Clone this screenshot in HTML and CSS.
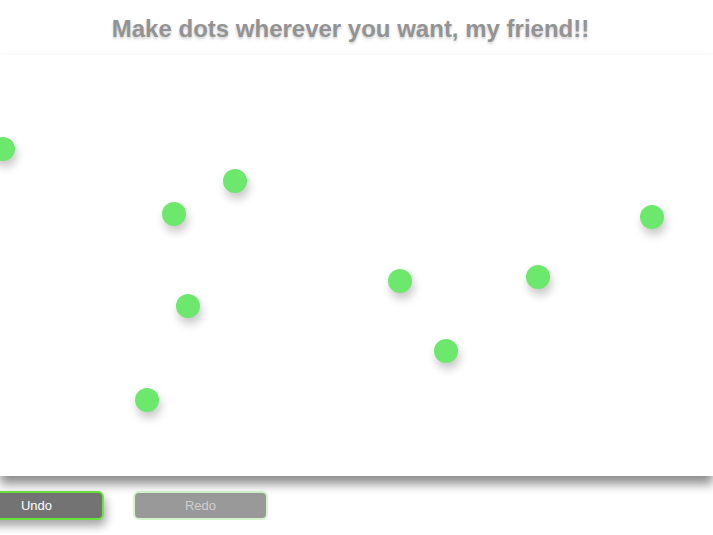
FILE: index.html
```html
<!DOCTYPE html>
<html>
<head>
<meta charset="utf-8">
<link rel="stylesheet" href="styles.css">
</head>
<body>
<header class="header">
  <h1 class="title">Make dots wherever you want, my friend!!</h1>
</header>
<main class="canvas">
  <span class="dot" style="left:3px;top:94px"></span>
  <span class="dot" style="left:174px;top:159px"></span>
  <span class="dot" style="left:235px;top:126px"></span>
  <span class="dot" style="left:188px;top:251px"></span>
  <span class="dot" style="left:147px;top:345px"></span>
  <span class="dot" style="left:400px;top:226px"></span>
  <span class="dot" style="left:446px;top:296px"></span>
  <span class="dot" style="left:538px;top:222px"></span>
  <span class="dot" style="left:652px;top:162px"></span>
</main>
<div class="controls">
  <button class="btn btn-undo">Undo</button>
  <button class="btn btn-redo">Redo</button>
</div>
</body>
</html>
```

FILE: styles.css
```css
html, body {
  margin: 0;
  padding: 0;
  background: #ffffff;
  overflow: hidden;
  font-family: "Liberation Sans", Arial, sans-serif;
}
.header {
  height: 55px;
  display: flex;
  justify-content: center;
  padding-right: 12px;
}
.title {
  margin: 0;
  padding-top: 15px;
  font-size: 24px;
  font-weight: bold;
  color: #939393;
  text-shadow: 0 2px 3px rgba(0,0,0,0.2);
  line-height: 28px;
}
.canvas {
  position: relative;
  height: 421px;
  background: #ffffff;
  box-shadow: 0 8px 10px rgba(0,0,0,0.45);
}
.dot {
  position: absolute;
  width: 24px;
  height: 24px;
  margin: -12px 0 0 -12px;
  border-radius: 50%;
  background: #6ce86c;
  box-shadow: 2px 6px 10px rgba(0,0,0,0.22);
}
.controls {
  display: flex;
  gap: 29px;
  padding: 15px 0 20px;
  margin-left: -31px;
}
.btn {
  width: 135px;
  height: 29px;
  border-radius: 6px;
  font-family: "Liberation Sans", Arial, sans-serif;
  font-size: 13px;
  padding: 0;
}
.btn-undo {
  background: #737373;
  color: #ffffff;
  border: 2px solid #66e63a;
  box-shadow: 2px 6px 10px rgba(0,0,0,0.35);
}
.btn-redo {
  background: #999999;
  color: #cfcfcf;
  border: 2px solid #d4f5cc;
}
```
